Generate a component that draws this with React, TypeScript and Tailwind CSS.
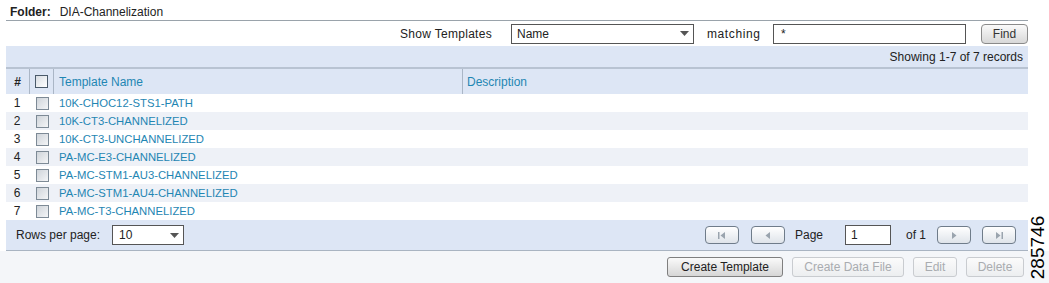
import React from 'react';

const templates = [
  '10K-CHOC12-STS1-PATH',
  '10K-CT3-CHANNELIZED',
  '10K-CT3-UNCHANNELIZED',
  'PA-MC-E3-CHANNELIZED',
  'PA-MC-STM1-AU3-CHANNELIZED',
  'PA-MC-STM1-AU4-CHANNELIZED',
  'PA-MC-T3-CHANNELIZED',
];

function Caret() {
  return (
    <svg width="9" height="5" viewBox="0 0 9 5" className="shrink-0">
      <path d="M0 0h9L4.5 5z" fill="#555" />
    </svg>
  );
}

function Check({ header }: { header?: boolean }) {
  return (
    <div
      className={
        header
          ? 'w-[13px] h-[13px] border border-[#4a5a6a] bg-gradient-to-br from-[#d8dde3] to-white'
          : 'w-[13px] h-[13px] border border-[#7d8a96] bg-gradient-to-br from-[#cfd4da] to-[#f4f5f7]'
      }
    />
  );
}

function PagerBtn({ kind }: { kind: 'first' | 'prev' | 'next' | 'last' }) {
  return (
    <button className="w-[34px] h-[18px] rounded-[4px] border border-[#6f7c8a] bg-gradient-to-b from-white to-[#dfe4ea] flex items-center justify-center">
      <svg width="10" height="9" viewBox="0 0 10 9">
        {kind === 'first' && (
          <>
            <rect x="1" y="1" width="1.5" height="7" fill="#9aa4ae" />
            <path d="M8 1v7L3.5 4.5z" fill="#9aa4ae" />
          </>
        )}
        {kind === 'prev' && <path d="M7 1v7L2.5 4.5z" fill="#9aa4ae" />}
        {kind === 'next' && <path d="M3 1v7l4.5-3.5z" fill="#9aa4ae" />}
        {kind === 'last' && (
          <>
            <path d="M2 1v7l4.5-3.5z" fill="#9aa4ae" />
            <rect x="7.5" y="1" width="1.5" height="7" fill="#9aa4ae" />
          </>
        )}
      </svg>
    </button>
  );
}

function ActionBtn({ label, disabled, w }: { label: string; disabled?: boolean; w: string }) {
  return (
    <button
      className={
        disabled
          ? `${w} h-[20px] rounded-[3px] border border-[#c9ccd0] bg-gradient-to-b from-[#fbfbfb] to-[#eceef0] text-[#a9acb0]`
          : `${w} h-[20px] rounded-[3px] border border-[#7f7f7f] bg-gradient-to-b from-[#fafafa] to-[#d6d6d6] text-[#222]`
      }
    >
      {label}
    </button>
  );
}

export default function App() {
  return (
    <div
      className="relative w-[1049px] h-[283px] bg-white text-[12px] text-[#222] overflow-hidden"
      style={{ fontFamily: '"Liberation Sans", Arial, sans-serif' }}
    >
      <div className="ml-[6px] w-[1022px]">
        <div className="h-[21px] flex items-start pt-[5px] leading-[15px] pl-[4px] border-b border-[#9aa3ab]">
          <span className="font-bold mr-[9px]">Folder:</span>
          <span>DIA-Channelization</span>
        </div>

        <div className="h-[25px] flex items-center justify-end whitespace-nowrap">
          <span className="shrink-0 w-[92px] mr-[19px] tracking-[0.3px]">Show Templates</span>
          <div className="shrink-0 w-[183px] h-[20px] border border-[#555] flex items-center justify-between pl-[5px] pr-[4px] mr-[13px]">
            <span>Name</span>
            <Caret />
          </div>
          <span className="shrink-0 w-[56px] mr-[10px] tracking-[0.6px]">matching</span>
          <div className="shrink-0 w-[193px] h-[20px] border border-[#555] pl-[7px] flex items-center mr-[15px]">*</div>
          <button className="shrink-0 w-[47px] h-[20px] rounded-[4px] border border-[#8a8a8a] bg-gradient-to-b from-[#fafafa] to-[#d8d8d8] text-[#333]">
            Find
          </button>
        </div>

        <div className="h-[23px] bg-[#dde6f5] border-b-2 border-[#b8c3d2] flex items-center justify-end pr-[5px]">
          Showing 1-7 of 7 records
        </div>

        <div className="h-[25px] bg-[#dde6f5] flex items-center">
          <div className="w-[24px] h-full flex items-center justify-center font-bold border-r border-[#aab6c6]">#</div>
          <div className="w-[24px] h-full flex items-center justify-center border-r border-[#aab6c6]">
            <Check header />
          </div>
          <div className="w-[409px] h-full flex items-center pl-[5px] text-[#1f86b3] border-r border-[#aab6c6]">
            Template Name
          </div>
          <div className="flex-1 h-full flex items-center pl-[4px] text-[#1f86b3]">Description</div>
        </div>

        {templates.map((t, i) => (
          <div key={t} className={`h-[18px] flex items-center ${i % 2 === 1 ? 'bg-[#eef1f7]' : 'bg-white'}`}>
            <div className="w-[24px] text-center pr-[2px]">{i + 1}</div>
            <div className="w-[24px] flex justify-center">
              <Check />
            </div>
            <div className="pl-[5px] text-[#1f86b3] text-[11.3px]">{t}</div>
          </div>
        ))}

        <div className="h-[31px] bg-[#dde6f5] border-b border-[#a9b4c2] flex items-center whitespace-nowrap">
          <span className="ml-[10px] w-[96px]">Rows per page:</span>
          <div className="w-[72px] h-[20px] border border-[#555] bg-white flex items-center justify-between pl-[6px] pr-[4px]">
            <span>10</span>
            <Caret />
          </div>
          <div className="ml-auto flex items-center mr-[12px]">
            <PagerBtn kind="first" />
            <div className="w-[12px]" />
            <PagerBtn kind="prev" />
            <span className="ml-[10px] mr-[22px]">Page</span>
            <div className="w-[46px] h-[20px] border border-[#555] bg-white pl-[5px] flex items-center">1</div>
            <span className="ml-[15px] mr-[11px]">of 1</span>
            <PagerBtn kind="next" />
            <div className="w-[11px]" />
            <PagerBtn kind="last" />
          </div>
        </div>
      </div>

      <div className="h-[32px] bg-[#f4f6f9] flex items-center justify-end pr-[25px] gap-[9px]">
        <ActionBtn label="Create Template" w="w-[116px]" />
        <ActionBtn label="Create Data File" disabled w="w-[112px]" />
        <ActionBtn label="Edit" disabled w="w-[44px]" />
        <ActionBtn label="Delete" disabled w="w-[58px]" />
      </div>

      <div className="absolute right-[1px] bottom-[1px] w-[20px] h-[70px] flex items-center justify-center">
        <span className="-rotate-90 text-[19px] leading-none text-black whitespace-nowrap">285746</span>
      </div>
    </div>
  );
}
